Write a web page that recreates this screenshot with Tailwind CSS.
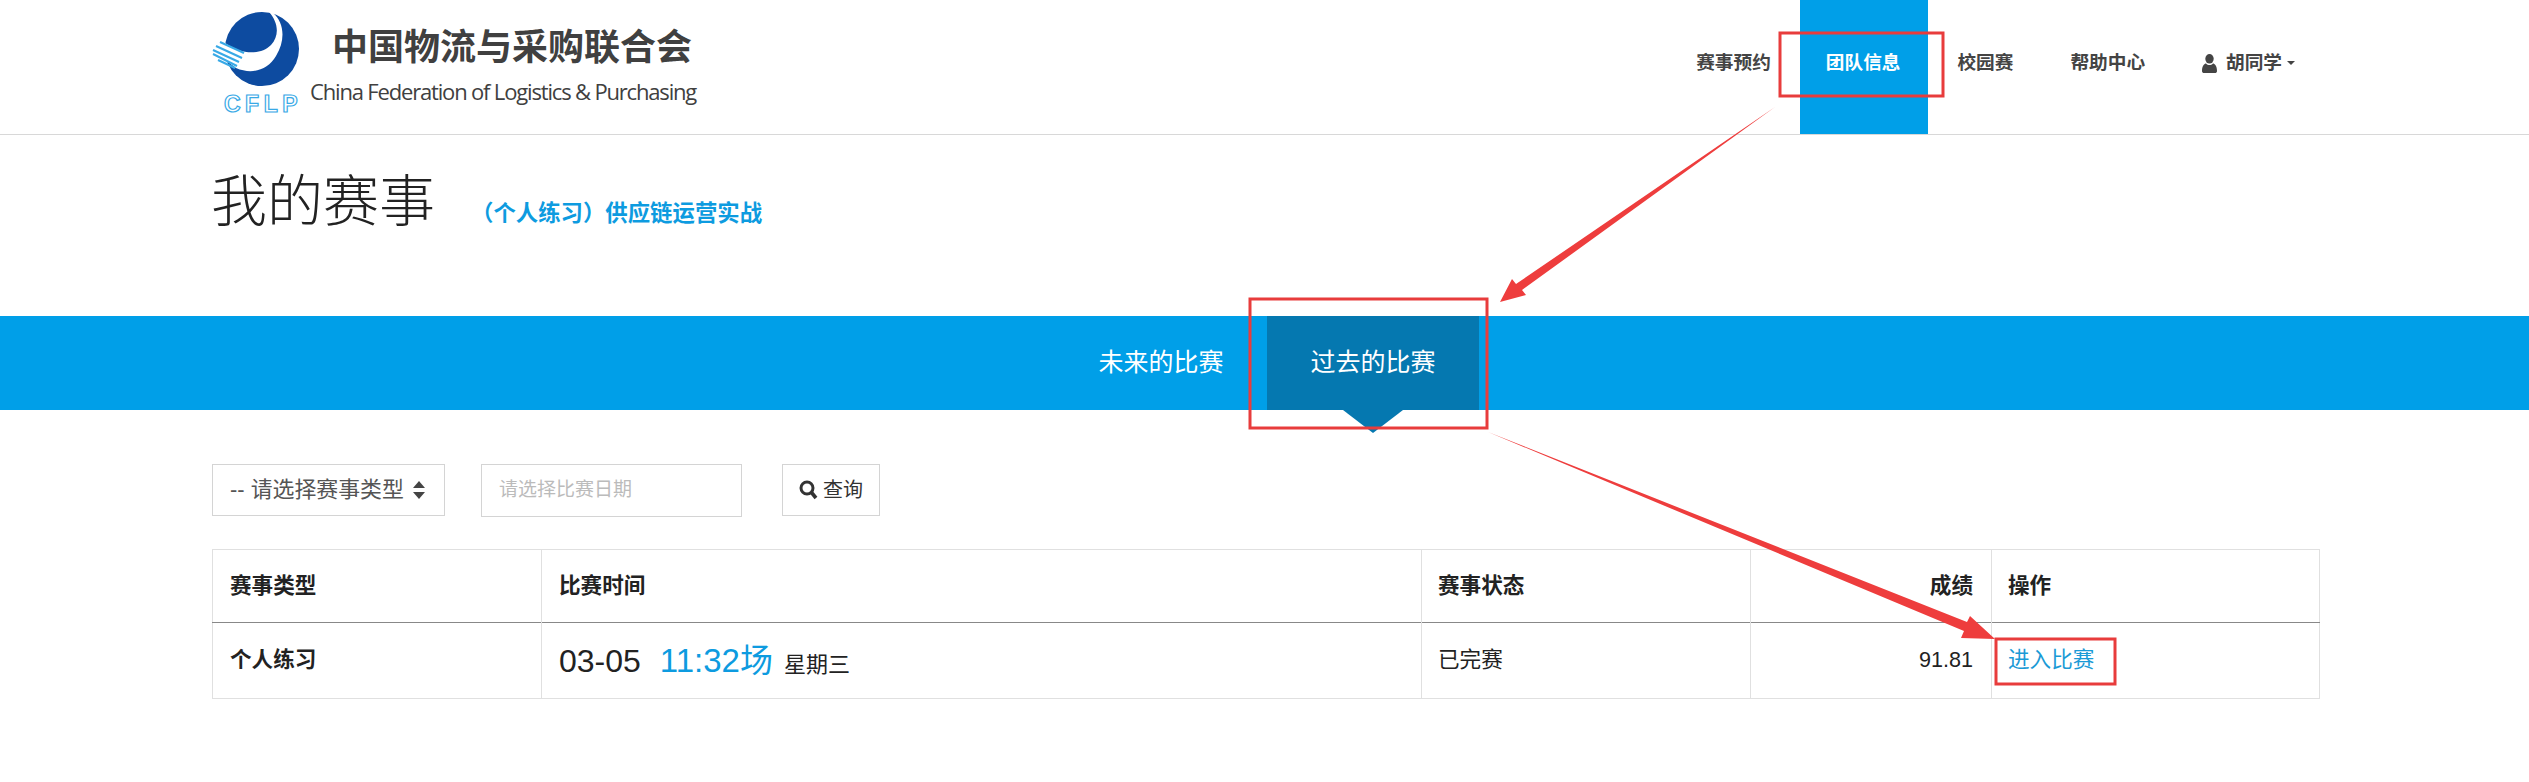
<!DOCTYPE html>
<html lang="zh-CN">
<head>
  <meta charset="UTF-8" />
  <title>我的赛事</title>
  <script src="https://cdn.jsdelivr.net/npm/@tailwindcss/browser@4"></script>
</head>
<body class="relative min-h-screen bg-white font-['Liberation_Sans','Noto_Sans_CJK_SC',sans-serif] text-[21.6px] text-[#222]">
  <!-- header -->
  <header class="h-[135px] border-b border-[#d8d8d8] flex justify-between pl-[200px] pr-[208px]">
    <a href="#" class="flex">
      <svg width="110" height="125" viewBox="0 0 110 125" class="shrink-0">
        <circle cx="62" cy="49" r="37" fill="#0d4ba0" />
        <path d="M69 12C78 22 80 35 71 45C60 56 40 54 25 43L12 50L36 68C52 75 68 70 76 56C86 40 84 22 73 13Z" fill="#fff" />
        <g fill="none" stroke="#38a9e6" stroke-width="2">
          <path d="M20 42L44 53" />
          <path d="M16 46L42 58" />
          <path d="M13 50L39 62" />
          <path d="M13 54L37 66" />
          <path d="M18 60L35 68" />
        </g>
        <text x="24" y="112" font-size="23" font-weight="700" letter-spacing="4.5" fill="#fff" stroke="#38a9e6" stroke-width="1.2" font-family="Liberation Sans">CFLP</text>
      </svg>
      <div class="w-[400px] pt-[25px]">
        <div class="pl-[22px] text-[36px] leading-[46px] font-bold text-[#404040] whitespace-nowrap">中国物流与采购联合会</div>
        <div class="mt-[6px] font-['Open_Sans'] text-[22px] leading-[28px] tracking-[-1.17px] text-[#404040] whitespace-nowrap">China Federation of Logistics &amp; Purchasing</div>
      </div>
    </a>
    <nav class="flex text-[18.67px] font-bold text-[#444] gap-px">
      <a href="#" class="px-[27px] flex items-center h-[134px] pb-[8px]">赛事预约</a>
      <a href="#" class="pl-[26px] pr-[28px] ml-px flex items-center h-[134px] pb-[8px] bg-[#009fe8] text-white">团队信息</a>
      <a href="#" class="px-[28px] flex items-center h-[134px] pb-[8px]">校园赛</a>
      <a href="#" class="px-[28px] flex items-center h-[134px] pb-[8px]">帮助中心</a>
      <a href="#" class="pl-[28px] pr-[26px] flex items-center h-[134px] pb-[8px]">
        <svg width="15" height="19" viewBox="0 0 15 19" class="mr-[9px]" fill="#444">
          <ellipse cx="7.5" cy="4.8" rx="4.2" ry="4.8" />
          <path d="M0 17C0 11.5 2.5 9.5 4 9.5C5 10.5 6.2 11 7.5 11C8.8 11 10 10.5 11 9.5C12.5 9.5 15 11.5 15 17C15 18.4 14 19 13 19H2C1 19 0 18.4 0 17Z" />
        </svg>
        胡同学
        <span class="ml-[5px] w-0 h-0 border-x-[4px] border-t-[4px] border-x-transparent border-t-[#444]"></span>
      </a>
    </nav>
  </header>

  <!-- title -->
  <section class="h-[181px] pl-[211px] pt-[32px] flex items-baseline">
    <h1 class="text-[56px] leading-[70px] font-light text-[#222]">我的赛事</h1>
    <span class="ml-[36px] text-[22.4px] font-bold text-[#0d9be0]">（个人练习）供应链运营实战</span>
  </section>

  <!-- tabs -->
  <div class="h-[94px] bg-[#009fe8] flex justify-center pl-[5px] text-[25px] text-white">
    <a href="#" class="w-[212px] flex items-center justify-center">未来的比赛</a>
    <a href="#" class="relative w-[212px] flex items-center justify-center bg-[#0578b0]">
      过去的比赛
      <span class="absolute left-[76px] top-full w-0 h-0 border-x-[30px] border-t-[23px] border-x-transparent border-t-[#0578b0]"></span>
    </a>
  </div>

  <main class="ml-[212px] w-[2108px] pt-[54px]">
    <!-- filters -->
    <form class="flex items-center h-[52px]">
      <div class="relative w-[233px] h-[52px]">
        <select class="appearance-none w-full h-full border border-[#d4d4d4] pl-[17px] text-[21.9px] text-[#555] bg-white">
          <option>-- 请选择赛事类型</option>
        </select>
        <svg width="12" height="20" viewBox="0 0 12 20" fill="#444" class="absolute right-[20px] top-[16px]">
          <path d="M6 1L12 8H0Z" />
          <path d="M0 12H12L6 19Z" />
        </svg>
      </div>
      <input type="text" placeholder="请选择比赛日期" class="ml-[36px] w-[261px] h-[53px] border border-[#d4d4d4] pl-[17px] text-[19px] placeholder:text-[#bbb]" />
      <button type="button" class="ml-[40px] w-[98px] h-[52px] border border-[#d4d4d4] flex items-center justify-center gap-[5px] text-[20px] text-[#333]">
        <svg width="19" height="20" viewBox="0 0 19 20" fill="none" stroke="#333">
          <circle cx="8" cy="8" r="6" stroke-width="3" />
          <path d="M12.5 12.5L17 18" stroke-width="3.6" />
        </svg>
        查询
      </button>
    </form>

    <!-- list -->
    <table class="mt-[33px] w-[2108px] table-fixed border-collapse border border-[#e0e0e0]">
      <thead>
        <tr class="h-[73px] border-b border-[#888]">
          <th class="w-[329px] border-r border-[#e0e0e0] pl-[17px] pr-[18px] text-left font-bold">赛事类型</th>
          <th class="w-[880px] border-r border-[#e0e0e0] pl-[17px] pr-[18px] text-left font-bold">比赛时间</th>
          <th class="w-[329px] border-r border-[#e0e0e0] pl-[16px] pr-[18px] text-left font-bold">赛事状态</th>
          <th class="w-[241px] border-r border-[#e0e0e0] px-[18px] text-right font-bold">成绩</th>
          <th class="px-[16px] text-left font-bold">操作</th>
        </tr>
      </thead>
      <tbody>
        <tr class="h-[76px]">
          <td class="border-r border-[#e0e0e0] pl-[17px] pr-[18px] font-bold">个人练习</td>
          <td class="border-r border-[#e0e0e0] pl-[17px] pr-[18px] whitespace-nowrap">
            <span class="text-[32px]">03-05</span>
            <span class="ml-[13px] text-[33px] text-[#0d9be0]">11:32场</span>
            <span class="ml-[5px] text-[22px]">星期三</span>
          </td>
          <td class="border-r border-[#e0e0e0] pl-[16px] pr-[18px]">已完赛</td>
          <td class="border-r border-[#e0e0e0] px-[18px] text-right">91.81</td>
          <td class="px-[16px]"><a href="#" class="text-[#1a9ad6]">进入比赛</a></td>
        </tr>
      </tbody>
    </table>
  </main>

  <!-- red annotations drawn over the page -->
  <svg width="2529" height="782" class="absolute left-0 top-0 pointer-events-none">
    <g fill="none" stroke="#e83c3c" stroke-width="3">
      <rect x="1780" y="33" width="163" height="63" />
      <rect x="1250" y="299" width="237" height="129" />
      <rect x="1996" y="639" width="119" height="45" />
    </g>
    <path d="M1775 107L1522 290L1526 295L1500 302L1512 279L1516 284Z" fill="#ee3d3d" />
    <path d="M1488 432L1967 622L1970 616L1995 639L1961 638L1964 631Z" fill="#ee3d3d" />
  </svg>
</body>
</html>
